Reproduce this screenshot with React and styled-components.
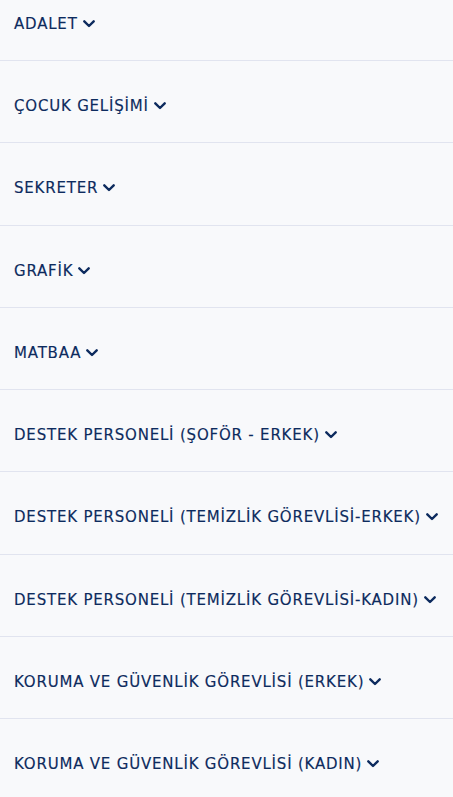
import React from "react";
import styled, { createGlobalStyle } from "styled-components";

const Global = createGlobalStyle`
  html, body { margin: 0; padding: 0; background: #f8f9fb; }
  body { font-family: "DejaVu Sans", "Noto Sans", sans-serif; }
`;

const List = styled.ul`
  list-style: none;
  margin: 0;
  padding: 0;
  background: #f8f9fb;
`;

const Item = styled.li`
  border-bottom: 1px solid #e1e4ef;
  height: ${(p) => (p.$first ? 61 : 82.25)}px;
  padding: ${(p) => (p.$first ? 0 : 22)}px 14px 0;
  box-sizing: border-box;
  display: flex;
  align-items: center;
`;

const Head = styled.button`
  display: inline-flex;
  align-items: center;
  gap: 5px;
  background: none;
  border: 0;
  padding: 0;
  margin-top: -13px;
  font-family: "DejaVu Sans", "Noto Sans", sans-serif;
  font-weight: 400;
  font-size: 15px;
  letter-spacing: 0.8px;
  -webkit-text-stroke: 0.15px #0d2b5e;
  color: #0d2b5e;
  cursor: pointer;
  white-space: nowrap;
`;

const Chevron = () => (
  <svg width="12" height="8" viewBox="0 0 12 8" fill="none">
    <path d="M1.3 1.3 L6 6 L10.7 1.3" stroke="#0d2b5e" strokeWidth="2.4" strokeLinecap="round" strokeLinejoin="round" />
  </svg>
);

const items = [
  "ADALET",
  "ÇOCUK GELİŞİMİ",
  "SEKRETER",
  "GRAFİK",
  "MATBAA",
  "DESTEK PERSONELİ (ŞOFÖR - ERKEK)",
  "DESTEK PERSONELİ (TEMİZLİK GÖREVLİSİ-ERKEK)",
  "DESTEK PERSONELİ (TEMİZLİK GÖREVLİSİ-KADIN)",
  "KORUMA VE GÜVENLİK GÖREVLİSİ (ERKEK)",
  "KORUMA VE GÜVENLİK GÖREVLİSİ (KADIN)",
];

export default function App() {
  return (
    <>
      <Global />
      <List>
        {items.map((t, i) => (
          <Item key={t} $first={i === 0}>
            <Head>
              {t}
              <Chevron />
            </Head>
          </Item>
        ))}
      </List>
    </>
  );
}
